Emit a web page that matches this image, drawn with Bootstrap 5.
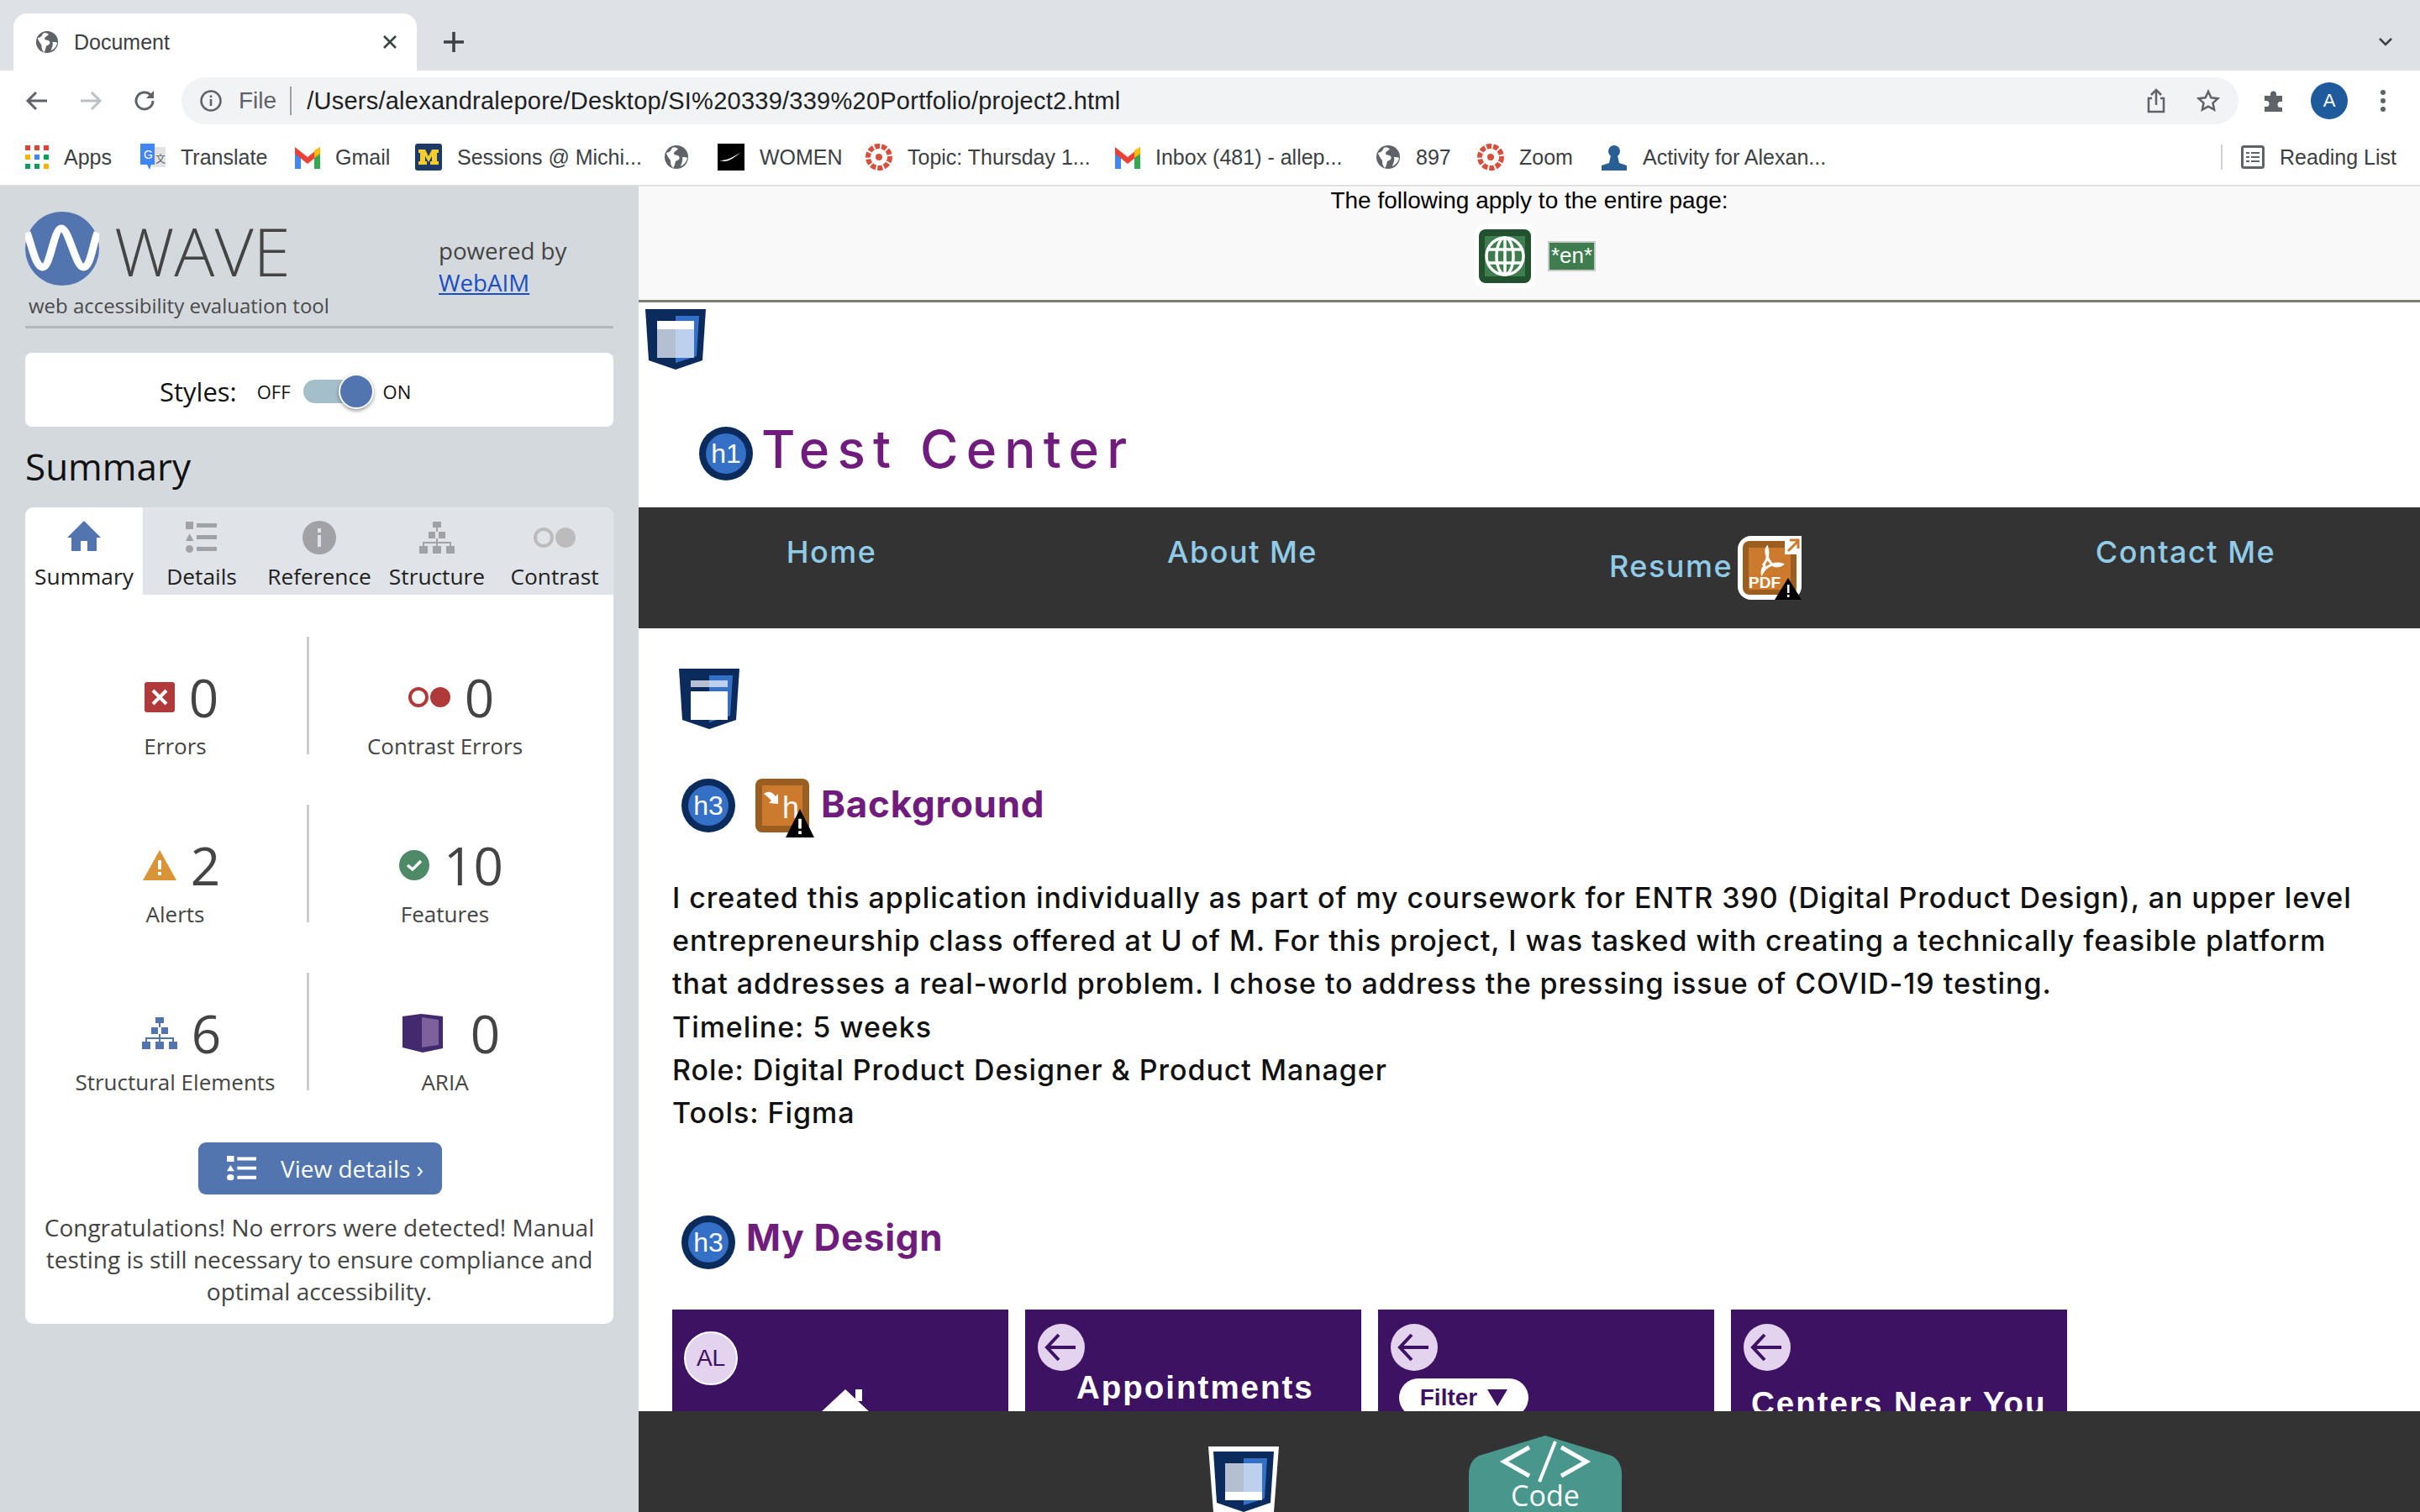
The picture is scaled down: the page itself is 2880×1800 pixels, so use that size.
<!DOCTYPE html>
<html lang="en">
<head>
<meta charset="UTF-8">
<title>Document</title>
<link href="https://cdn.jsdelivr.net/npm/bootstrap@5.3.0/dist/css/bootstrap.min.css" rel="stylesheet">
<style>
html, body { margin: 0; height: 1800px; overflow: hidden; background: #fff; }
body { font-family: "Open Sans", sans-serif; color: #3c4043; }
svg { display: block; flex: none; }

/* browser chrome */
.tab-strip { height: 84px; background: #dee1e6; padding: 16px 0 0 16px; }
.doc-tab { width: 480px; height: 68px; background: #fff; border-radius: 16px 16px 0 0; padding: 0 22px 0 26px; font: 25px "Liberation Sans", sans-serif; }
.doc-tab span { margin-left: 18px; color: #3c4043; }
.plus-btn { margin-left: 30px; margin-top: 20px; width: 28px; }
.strip-chev { margin: 28px 32px 0 auto; }
.tool-bar { height: 64px; padding-right: 28px; }
.nav-icons { width: 216px; height: 72px; padding-left: 30px; gap: 36px; }
.addr-bar { width: 2448px; height: 56px; margin-top: 8px; background: #f1f3f4; border-radius: 28px; padding: 0 22px 0 22px; font: 28px "Liberation Sans", sans-serif; color: #202124; }
.addr-file { color: #5f6368; margin-left: 20px; padding-right: 16px; border-right: 2px solid #9aa0a6; line-height: 34px; margin-right: 18px; }
.addr-url { font-size: 29px; letter-spacing: .25px; }
.avatar-dot { width: 44px; height: 44px; border-radius: 50%; background: #1f5a9c; color: #fff; font: 22px "Liberation Sans", sans-serif; }
.mark-bar { height: 74px; padding: 6px 28px 0 30px; font: 25px "Liberation Sans", sans-serif; color: #3c4043; border-bottom: 2px solid #dedede; }
.bm-item { gap: 18px; white-space: nowrap; }
.bm-sep { border-left: 2px solid #d0d2d5; height: 30px; margin-left: auto; margin-right: 22px; }

/* wave panel */
.page-row { height: 1578px; }
.wave-side { width: 760px; background: #d4d9de; padding: 30px 30px 0; flex: none; }
.wave-name { font-size: 80px; font-weight: 300; line-height: 88px; color: #444; margin: 3px 0 0 18px; }
.wave-logo-row { height: 88px; }
.wave-left { flex: 0 0 492px; }
.wave-tag { font-size: 24px; line-height: 34px; color: #4a4a4a; margin: 7px 0 0 4px; white-space: nowrap; }
.wave-power { font-size: 27.7px; line-height: 38px; color: #444; margin: 0; padding-top: 27px; white-space: nowrap; }
.wave-power a { color: #1a4fc4; }
.wave-rule { border-top: 3px solid #b4b8bd; margin-top: 7px; }
.styles-box { height: 88px; margin-top: 29px; background: #fff; border-radius: 8px; color: #111; padding: 4px 0 0 160px; }
.styles-lab { font-size: 31px; margin-right: 24px; }
.styles-sm { font-size: 22px; }
.tog-track { width: 60px; height: 28px; background: #a5bfca; border-radius: 14px; margin: 0 10px 0 15px; position: relative; }
.tog-knob { position: absolute; right: -24px; top: -7px; width: 42px; height: 42px; background: #5275b0; border: 2px solid #fff; border-radius: 50%; box-shadow: 0 2px 4px rgba(0,0,0,.4); }
.tog-track + span { margin-left: 25px; }
.sum-title { font-size: 44px; font-weight: 400; line-height: 60px; color: #111; margin: 17px 0 19px; }
.sum-card { background: #fff; border-radius: 10px; height: 972px; overflow: hidden; }
.tab-row { background: #e0e4e9; height: 104px; }
.tab-cell { width: 140px; padding-top: 16px; font-size: 26.3px; color: #222; line-height: 36px; }
.tab-cell svg { height: 40px; margin-bottom: 8px; }
.tab-on { background: #fff; }
.stat-grid { display: grid; grid-template-columns: 316px 323px; margin: 50px 0 0 22px; row-gap: 60px; }
.stat-cell { height: 140px; padding-top: 34px; text-align: center; }
.stat-cell:nth-child(odd) { border-right: 3px solid #cdcdcd; }
.stat-num { font-size: 62px; line-height: 76px; color: #444; gap: 17px; padding-left: 15px; }
.stat-lab { font-size: 26px; line-height: 36px; color: #444; margin-top: 2px; }
.view-btn { width: 290px; height: 62px; margin: 62px 0 0 206px; padding: 0 0 0 34px; background: #5275b0; border: 0; border-radius: 9px; color: #fff; font-size: 28px; gap: 28px; }
.view-btn:hover { background: #5275b0; color: #fff; }
.sum-note { font-size: 28px; line-height: 38px; color: #444; text-align: center; margin: 20px 10px 0; }

/* page under test */
.site-col { width: 2120px; }
.apply-bar { height: 138px; background: #f9f9f9; border-bottom: 3px solid #7a7d70; font: 28px/32px "Liberation Sans", sans-serif; color: #000; padding-top: 1px; }
.apply-icons { gap: 15px; margin-top: 12px; padding-left: 14px; }
.en-chip { width: 57px; height: 36px; background: #3f7d4f; border: 2px solid #c8c8c8; color: #fff; font-size: 26px; line-height: 30px; text-align: center; }
.site-body { height: 1320px; overflow: hidden; font-family: Inter, sans-serif; color: #111; }
.head-row { margin: 8px 0 0 8px; }
.title-row { margin: 68px 0 0 72px; gap: 10px; color: #701c7c; font-size: 62px; line-height: 64px; letter-spacing: 9.2px; font-weight: 500; }
.title-row span { margin-top: -10px; }
.site-nav { height: 144px; margin-top: 32px; background: #333; color: #90cce8; font-size: 36px; font-weight: 500; letter-spacing: 1.5px; }
.nav-slot { padding-top: 32px; line-height: 42px; text-align: center; }
.nav-res { padding-top: 34px; gap: 6px; }
.nav-res span { margin-top: 9px; }
.shield-two { margin: 48px 0 0 48px; }
.sec-row { margin: 53px 0 0 51px; color: #701c7c; font-size: 44px; font-weight: 700; line-height: 64px; letter-spacing: .7px; }
.bg-word { margin: -4px 0 0 8px; }
.para-txt { margin: 46px 0 0 40px; font-size: 34px; letter-spacing: .95px; line-height: 51.2px; font-weight: 500; width: 2040px; color: #111; }
.design-row { margin-top: 91px; }
.design-row svg { margin-top: 6px; }
.design-row span { margin: -6px 0 0 13px; }
.shots { margin: 48px 0 0 40px; gap: 20px; }
.shot-box { width: 400px; height: 240px; background: #3e1263; position: relative; color: #fff; font-weight: 700; font-family: "Liberation Sans", sans-serif; padding: 16px 0 0 14px; }
.al-dot { width: 64px; height: 64px; border-radius: 50%; background: #e3d3ef; border: 2px solid #fff; color: #3e1263; font-size: 28px; font-weight: 400; margin-top: 10px; }
.shot-txt { font-size: 38.5px; letter-spacing: 2px; margin-top: -5px; padding-left: 47px; line-height: 48px; }
.filter-pill { width: 154px; height: 46px; background: #fff; color: #3e1263; border-radius: 24px; font-size: 28px; margin: 8px 0 0 11px; gap: 12px; }
.foot-bar { height: 120px; background: #333; }
.code-tab { width: 182px; height: 91px; margin-left: 226px; margin-top: 29px; color: #fff; position: relative; flex: none; }
.foot-shield { margin-top: 42px; margin-left: 678px; }
.code-lab { position: absolute; left: 0; right: 0; top: 53px; text-align: center; font-size: 34px; line-height: 36px; }
</style>
</head>
<body>
<svg width="0" height="0" class="position-absolute">
  <defs>
    <symbol id="globe" viewBox="0 0 30 30">
      <circle cx="15" cy="15" r="14" fill="#5f6368"/>
      <path d="M3 10c4-1 5-2 7-6 3-1 5 0 7 1-2 3-5 3-5 6 0 2 4 1 6 3 2 3-1 5-4 6-1 3-1 6-3 8-3-3-3-6-3-9-2-3-4-5-5-9zM22 15c3 0 5 0 6 1-1 5-4 8-8 10 1-4 3-6 2-11z" fill="#fff"/>
    </symbol>
    <symbol id="shield" viewBox="0 0 72 72">
      <path d="M0 0h72l-4 61-32 11-32-11z" fill="#0a2b5c"/>
      <path d="M36 8h28l-3 48-25 8z" fill="#3570c7"/>
    </symbol>
    <symbol id="h-ring" viewBox="0 0 64 64">
      <circle cx="32" cy="32" r="32" fill="#0a2b5c"/>
      <circle cx="32" cy="32" r="24" fill="#3570c7"/>
    </symbol>
    <symbol id="warn-tri" viewBox="0 0 26 26">
      <path d="M13 0l13 26H0z" fill="#000"/>
      <path d="M11.600 9h2.800v9h-2.800zM11.600 20h2.800v3h-2.800z" fill="#fff"/>
    </symbol>
    <symbol id="list-g" viewBox="0 0 38 38">
      <path d="M0 0h9v9H0zM4.500 14l5 9H0zM4.500 28a4.500 4.500 0 1 1 0 9 4.500 4.500 0 0 1 0-9zM13 2h24v5H13zM13 16h24v5H13zM13 30h24v5H13z"/>
    </symbol>
    <symbol id="tree-g" viewBox="0 0 42 38">
      <path d="M16 0h10v7H16zM20 7h2v5h-2zM11 12h8v8h-8zM23 12h8v8h-8zM5 24h32v2H5zM20 20h2v9h-2zM4 24h2v5H4zM36 24h2v5h-2zM0 29h10v9H0zM16 29h10v9H16zM32 29h10v9H32z"/>
    </symbol>
    <symbol id="back-arrow" viewBox="0 0 58 58">
      <circle cx="29" cy="29" r="28" fill="#e3d3ef"/>
      <path d="M12 29h34M26 14L12 29l14 15" fill="none" stroke="#3e1263" stroke-width="4"/>
    </symbol>
  </defs>
</svg>

<div class="tab-strip d-flex align-items-start">
  <div class="doc-tab d-flex align-items-center">
    <svg width="28" height="28"><use href="#globe"/></svg>
    <span>Document</span>
    <svg class="ms-auto" width="20" height="20" viewBox="0 0 20 20"><path d="M3 3l14 14M17 3L3 17" stroke="#3c4043" stroke-width="2.500"/></svg>
  </div>
  <svg class="plus-btn" height="28" viewBox="0 0 28 28"><path d="M14 2v24M2 14h24" stroke="#3c4043" stroke-width="3.500"/></svg>
  <svg class="strip-chev" width="18" height="12" viewBox="0 0 18 12"><path d="M2 2l7 7 7-7" fill="none" stroke="#3c4043" stroke-width="2.500"/></svg>
</div>

<div class="tool-bar d-flex align-items-start">
  <div class="nav-icons d-flex align-items-center">
    <svg width="28" height="28" viewBox="0 0 28 28"><path d="M26 14H4M13 4L3 14l10 10" fill="none" stroke="#5f6368" stroke-width="3"/></svg>
    <svg width="28" height="28" viewBox="0 0 28 28"><path d="M2 14h22M15 4l10 10-10 10" fill="none" stroke="#bdc1c6" stroke-width="3"/></svg>
    <svg width="28" height="28" viewBox="0 0 28 28"><path d="M24 14a10 10 0 1 1-3-7.200" fill="none" stroke="#5f6368" stroke-width="3"/><path d="M25 2v9h-9z" fill="#5f6368"/></svg>
  </div>
  <div class="addr-bar d-flex align-items-center">
    <svg width="26" height="26" viewBox="0 0 26 26"><circle cx="13" cy="13" r="11.500" fill="none" stroke="#5f6368" stroke-width="2.500"/><path d="M11.700 11h2.600v8h-2.600zM11.700 6.500h2.600v2.600h-2.600z" fill="#5f6368"/></svg>
    <span class="addr-file">File</span>
    <span class="addr-url">/Users/alexandralepore/Desktop/SI%20339/339%20Portfolio/project2.html</span>
    <svg class="ms-auto" width="24" height="30" viewBox="0 0 24 30" style="margin-right:36px"><path d="M12 20V3M6 8l6-6 6 6M7 12H3v16h18V12h-4" fill="none" stroke="#5f6368" stroke-width="2.500"/></svg>
    <svg width="28" height="28" viewBox="0 0 28 28"><path d="M14 3l3.400 7.300 8 1-5.900 5.400 1.600 7.900-7.100-4-7.100 4 1.600-7.900L2.600 11.300l8-1z" fill="none" stroke="#5f6368" stroke-width="2.500"/></svg>
  </div>
  <div class="d-flex align-items-center" style="height:72px;margin-left:28px">
    <svg width="28" height="28" viewBox="0 0 28 28"><path d="M3 8h7V6a3.500 3.500 0 0 1 7 0v2h7v7h-2a3.500 3.500 0 0 0 0 7h2v5H3v-6h2a3.500 3.500 0 0 0 0-7H3z" fill="#5f6368"/></svg>
    <div class="avatar-dot d-flex align-items-center justify-content-center" style="margin-left:30px">A</div>
    <svg width="6" height="28" viewBox="0 0 6 28" style="margin-left:39px"><circle cx="3" cy="4" r="3" fill="#5f6368"/><circle cx="3" cy="14" r="3" fill="#5f6368"/><circle cx="3" cy="24" r="3" fill="#5f6368"/></svg>
  </div>
</div>

<div class="mark-bar d-flex align-items-center">
  <div class="bm-item d-flex align-items-center" style="width:137px">
    <svg width="28" height="28" viewBox="0 0 28 28"><path d="M0 0h6v6H0zM11 0h6v6h-6zM22 0h6v6h-6z" fill="#db4437"/><path d="M0 11h6v6H0z" fill="#f4b400"/><path d="M11 11h6v6h-6z" fill="#4285f4"/><path d="M22 11h6v6h-6z" fill="#0f9d58"/><path d="M0 22h6v6H0zM11 22h6v6h-6z" fill="#0f9d58"/><path d="M22 22h6v6h-6z" fill="#f4b400"/></svg><span>Apps</span>
  </div>
  <div class="bm-item d-flex align-items-center" style="width:184px">
    <svg width="30" height="32" viewBox="0 0 30 32"><path d="M14 4h16v24H14z" fill="#e3e3e3"/><path d="M0 0h17v25H13l-2 6-3-6H0z" fill="#4285f4"/><text x="4" y="18" font-size="14" fill="#fff" font-family="Liberation Sans">G</text><text x="18" y="23" font-size="12" fill="#5f6368" font-family="Noto Sans CJK SC">文</text></svg><span>Translate</span>
  </div>
  <div class="bm-item d-flex align-items-center" style="width:143px">
    <svg width="30" height="28" viewBox="0 0 30 28"><path d="M0 4v24h7V13z" fill="#4285f4"/><path d="M30 4v24h-7V13z" fill="#34a853"/><path d="M0 2l15 12L30 2v8L15 22 0 10z" fill="#ea4335"/><path d="M23 6l7-4v8l-7 5z" fill="#fbbc04"/></svg><span>Gmail</span>
  </div>
  <div class="bm-item d-flex align-items-center" style="width:296px">
    <svg width="32" height="32" viewBox="0 0 32 32"><rect width="32" height="32" rx="3" fill="#1d3a66"/><path d="M4 7h8l4 8 4-8h8v4h-2v10h2v4H18v-4h2v-6l-4 7-4-7v6h2v4H4v-4h2V11H4z" fill="#f5cc2f"/></svg><span>Sessions @ Michi...</span>
  </div>
  <div class="bm-item d-flex align-items-center" style="width:64px">
    <svg width="30" height="30"><use href="#globe"/></svg>
  </div>
  <div class="bm-item d-flex align-items-center" style="width:176px">
    <svg width="32" height="32" viewBox="0 0 32 32"><rect width="32" height="32"/><path d="M4 20c7 0 15-4 24-10-7 6-14 11-20 11-3 0-5-1-4-1z" fill="#fff"/></svg><span>WOMEN</span>
  </div>
  <div class="bm-item d-flex align-items-center" style="width:297px">
    <svg width="32" height="32" viewBox="0 0 32 32"><circle cx="16" cy="16" r="13" fill="none" stroke="#d94f3d" stroke-width="6" stroke-dasharray="6 2"/><circle cx="16" cy="16" r="4" fill="#d94f3d"/></svg><span>Topic: Thursday 1...</span>
  </div>
  <div class="bm-item d-flex align-items-center" style="width:310px">
    <svg width="30" height="28" viewBox="0 0 30 28"><path d="M0 4v24h7V13z" fill="#4285f4"/><path d="M30 4v24h-7V13z" fill="#34a853"/><path d="M0 2l15 12L30 2v8L15 22 0 10z" fill="#ea4335"/><path d="M23 6l7-4v8l-7 5z" fill="#fbbc04"/></svg><span>Inbox (481) - allep...</span>
  </div>
  <div class="bm-item d-flex align-items-center" style="width:121px">
    <svg width="30" height="30"><use href="#globe"/></svg><span>897</span>
  </div>
  <div class="bm-item d-flex align-items-center" style="width:147px">
    <svg width="32" height="32" viewBox="0 0 32 32"><circle cx="16" cy="16" r="13" fill="none" stroke="#d94f3d" stroke-width="6" stroke-dasharray="6 2"/><circle cx="16" cy="16" r="4" fill="#d94f3d"/></svg><span>Zoom</span>
  </div>
  <div class="bm-item d-flex align-items-center">
    <svg width="32" height="32" viewBox="0 0 32 32"><circle cx="16" cy="9" r="7" fill="#2a5f93"/><path d="M12 14h8l2 9 9 3v6H1v-6l9-3z" fill="#2a5f93"/></svg><span>Activity for Alexan...</span>
  </div>
  <div class="bm-sep"></div>
  <div class="bm-item d-flex align-items-center">
    <svg width="28" height="28" viewBox="0 0 28 28"><rect x="1.500" y="1.500" width="25" height="25" rx="2" fill="none" stroke="#5f6368" stroke-width="3"/><path d="M6 8h4v2H6zM12 8h10v2H12zM6 13h4v2H6zM12 13h10v2H12zM6 18h4v2H6zM12 18h10v2H12z" fill="#5f6368"/></svg><span>Reading List</span>
  </div>
</div>

<div class="page-row d-flex">
  <aside class="wave-side">
    <div class="d-flex">
      <div class="wave-left">
        <div class="wave-logo-row d-flex align-items-center">
          <svg width="88" height="88" viewBox="0 0 88 88"><circle cx="44" cy="44" r="44" fill="#5275b0"/><path d="M2 25C8 40 12 66 21 66S34 20 43 20 60 66 69 66 80 40 86 25" fill="none" stroke="#fff" stroke-width="9"/></svg>
          <span class="wave-name">WAVE</span>
        </div>
        <div class="wave-tag">web accessibility evaluation tool</div>
      </div>
      <p class="wave-power">powered by<br><a href="#">WebAIM</a></p>
    </div>
    <div class="wave-rule"></div>
    <div class="styles-box d-flex align-items-center">
      <span class="styles-lab">Styles:</span>
      <span class="styles-sm">OFF</span>
      <div class="tog-track"><div class="tog-knob"></div></div>
      <span class="styles-sm">ON</span>
    </div>
    <h2 class="sum-title">Summary</h2>
    <div class="sum-card">
      <div class="tab-row d-flex">
        <div class="tab-cell tab-on d-flex flex-column align-items-center">
          <svg width="40" height="40" viewBox="0 0 40 40"><path d="M20 0l20 20h-5v16H24V24h-8v12H5V20H0z" fill="#5275b0"/></svg>Summary
        </div>
        <div class="tab-cell d-flex flex-column align-items-center">
          <svg width="38" height="38" fill="#a0a2a5"><use href="#list-g"/></svg>Details
        </div>
        <div class="tab-cell d-flex flex-column align-items-center">
          <svg width="40" height="40" viewBox="0 0 40 40"><circle cx="20" cy="20" r="20" fill="#a0a2a5"/><path d="M18 17h4v14h-4zM18 9h4v5h-4z" fill="#e0e4e9"/></svg>Reference
        </div>
        <div class="tab-cell d-flex flex-column align-items-center">
          <svg width="42" height="38" fill="#a0a2a5"><use href="#tree-g"/></svg>Structure
        </div>
        <div class="tab-cell d-flex flex-column align-items-center">
          <svg width="50" height="40" viewBox="0 0 50 40"><circle cx="12" cy="20" r="10" fill="none" stroke="#bcbcbc" stroke-width="4"/><circle cx="38" cy="20" r="12" fill="#bcbcbc"/></svg>Contrast
        </div>
      </div>
      <div class="stat-grid">
        <div class="stat-cell">
          <div class="stat-num d-flex align-items-center justify-content-center">
            <svg width="36" height="36" viewBox="0 0 36 36"><rect width="36" height="36" rx="3" fill="#b03a3a"/><path d="M10 10l16 16M26 10L10 26" stroke="#fff" stroke-width="4"/></svg>0
          </div>
          <div class="stat-lab">Errors</div>
        </div>
        <div class="stat-cell">
          <div class="stat-num d-flex align-items-center justify-content-center">
            <svg width="50" height="24" viewBox="0 0 50 24"><circle cx="12" cy="12" r="10" fill="none" stroke="#b03a3a" stroke-width="4"/><circle cx="38" cy="12" r="12" fill="#b03a3a"/></svg>0
          </div>
          <div class="stat-lab">Contrast Errors</div>
        </div>
        <div class="stat-cell">
          <div class="stat-num d-flex align-items-center justify-content-center">
            <svg width="40" height="36" viewBox="0 0 40 36"><path d="M20 0l20 36H0z" fill="#d99437"/><path d="M18 12h4v11h-4zM18 26h4v4h-4z" fill="#fff"/></svg>2
          </div>
          <div class="stat-lab">Alerts</div>
        </div>
        <div class="stat-cell">
          <div class="stat-num d-flex align-items-center justify-content-center">
            <svg width="36" height="36" viewBox="0 0 36 36"><circle cx="18" cy="18" r="18" fill="#4f8a68"/><path d="M10 18l6 5 10-10" fill="none" stroke="#fff" stroke-width="3.500"/></svg>10
          </div>
          <div class="stat-lab">Features</div>
        </div>
        <div class="stat-cell">
          <div class="stat-num d-flex align-items-center justify-content-center">
            <svg width="42" height="38" fill="#5275b0"><use href="#tree-g"/></svg>6
          </div>
          <div class="stat-lab">Structural Elements</div>
        </div>
        <div class="stat-cell">
          <div class="stat-num d-flex align-items-center justify-content-center" style="gap:33px">
            <svg width="48" height="46" viewBox="0 0 48 46"><path d="M0 3l22-3 26 3v38l-24 5L0 40z" fill="#43296e"/><path d="M23 4l20 3v30l-20 3z" fill="#7c619c"/></svg>0
          </div>
          <div class="stat-lab">ARIA</div>
        </div>
      </div>
      <button class="btn view-btn d-flex align-items-center">
        <svg width="36" height="30" viewBox="0 0 38 38" preserveAspectRatio="none" fill="#fff"><use href="#list-g"/></svg>View details ›
      </button>
      <p class="sum-note">Congratulations! No errors were detected! Manual testing is still necessary to ensure compliance and optimal accessibility.</p>
    </div>
  </aside>

  <main class="site-col d-flex flex-column">
    <div class="apply-bar text-center">
      <div>The following apply to the entire page:</div>
      <div class="apply-icons d-flex justify-content-center align-items-center">
        <svg width="72" height="76" viewBox="0 0 72 76"><rect width="72" height="76" rx="10" fill="#fff"/><rect x="5" y="6" width="62" height="64" rx="8" fill="#21512f"/><rect x="12" y="14" width="48" height="48" fill="#3f7d4f"/><g fill="none" stroke="#fff" stroke-width="3.500"><circle cx="36" cy="38" r="22"/><ellipse cx="36" cy="38" rx="10" ry="22"/><path d="M15 30h42M15 46h42M36 16v44"/></g></svg>
        <div class="en-chip">*en*</div>
      </div>
    </div>
    <div class="site-body flex-grow-1">
      <div class="head-row">
        <svg width="72" height="72" viewBox="0 0 72 72"><use href="#shield"/><rect x="14" y="14" width="44" height="10" fill="#fff"/><rect x="14" y="24" width="22" height="34" fill="#b4c0d2"/><rect x="36" y="24" width="22" height="34" fill="#bdd1ee"/></svg>
      </div>
      <h1 class="title-row d-flex align-items-center mb-0">
        <svg width="64" height="64" viewBox="0 0 64 64"><use href="#h-ring"/><text x="32" y="43" text-anchor="middle" font-size="32" fill="#fff" font-family="Liberation Sans" letter-spacing="0" font-weight="400">h1</text></svg>
        <span>Test Center</span>
      </h1>
      <nav class="site-nav d-flex">
        <div class="nav-slot" style="flex:0 0 459px">Home</div>
        <div class="nav-slot" style="flex:0 0 519px">About Me</div>
        <div class="nav-res d-flex align-items-start" style="flex:0 0 584px;padding-left:177px"><span>Resume</span>
          <svg width="76" height="76" viewBox="0 0 76 76"><rect width="76" height="76" rx="16" fill="#fff"/><rect x="6" y="6" width="64" height="64" rx="8" fill="#9a5e21"/><rect x="13" y="14" width="50" height="50" fill="#cc7b2e"/><path d="M56 0h20v22H56z" fill="#fff"/><path d="M60 18L72 6M62 5h10v10" stroke="#cc7b2e" stroke-width="3" fill="none"/><path d="M31 34c5-6 6-14 4-20-3 4 0 14 6 20 4 3 10 2 12 0-6-2-18-1-24 10-1-6 5-8 2-10z" fill="none" stroke="#fff" stroke-width="3"/><text x="32" y="62" text-anchor="middle" font-size="19" font-weight="700" fill="#fff" letter-spacing="0" font-family="Liberation Sans">PDF</text><path d="M60 50l16 26H44z"/><path d="M59 58h2.500v10H59zM59 70h2.500v3H59z" fill="#fff"/></svg>
        </div>
        <div class="nav-slot flex-grow-1">Contact Me</div>
      </nav>
      <div class="shield-two">
        <svg width="72" height="72" viewBox="0 0 72 72"><use href="#shield"/><rect x="14" y="14" width="22" height="8" fill="#b4c0d2"/><rect x="36" y="14" width="22" height="8" fill="#bdd1ee"/><rect x="14" y="27" width="44" height="34" fill="#fff"/></svg>
      </div>
      <h3 class="sec-row d-flex align-items-center mb-0">
        <svg width="64" height="64" viewBox="0 0 64 64"><use href="#h-ring"/><text x="32" y="43" text-anchor="middle" font-size="32" fill="#fff" font-family="Liberation Sans" letter-spacing="0" font-weight="400">h3</text></svg>
        <svg width="70" height="70" viewBox="0 0 70 70" style="margin-left:24px;margin-top:6px"><rect width="64" height="64" rx="8" fill="#9a5e21"/><rect x="8" y="8" width="48" height="48" fill="#cc7b2e"/><path d="M10 18c6-4 10-2 14 3l3-3v12l-11-1 3-3c-3-3-5-5-9-8z" fill="#fff"/><text x="42" y="47" text-anchor="middle" font-size="36" fill="#fff" font-family="Liberation Sans" letter-spacing="0" font-weight="400">h</text><use href="#warn-tri" x="36" y="36" width="34" height="34"/></svg>
        <span class="bg-word">Background</span>
      </h3>
      <p class="para-txt mb-0">I created this application individually as part of my coursework for ENTR 390 (Digital Product Design), an upper level entrepreneurship class offered at U of M. For this project, I was tasked with creating a technically feasible platform that addresses a real-world problem. I chose to address the pressing issue of COVID-19 testing.<br>Timeline: 5 weeks<br>Role: Digital Product Designer &amp; Product Manager<br>Tools: Figma</p>
      <h3 class="sec-row design-row d-flex align-items-center mb-0">
        <svg width="64" height="64" viewBox="0 0 64 64"><use href="#h-ring"/><text x="32" y="43" text-anchor="middle" font-size="32" fill="#fff" font-family="Liberation Sans" letter-spacing="0" font-weight="400">h3</text></svg>
        <span>My Design</span>
      </h3>
      <div class="shots d-flex">
        <div class="shot-box">
          <div class="al-dot d-flex align-items-center justify-content-center">AL</div>
          <svg class="position-absolute" style="left:176px;top:95px" width="60" height="40" viewBox="0 0 60 40"><path d="M30 0l30 28H0zM42 0h8v14h-8z" fill="#fff"/></svg>
        </div>
        <div class="shot-box">
          <svg width="58" height="58"><use href="#back-arrow"/></svg>
          <div class="shot-txt">Appointments</div>
        </div>
        <div class="shot-box">
          <svg width="58" height="58"><use href="#back-arrow"/></svg>
          <div class="filter-pill d-flex align-items-center justify-content-center">Filter <svg width="24" height="20" viewBox="0 0 24 20"><path d="M0 0h24L12 20z" fill="#3e1263"/></svg></div>
        </div>
        <div class="shot-box">
          <svg width="58" height="58"><use href="#back-arrow"/></svg>
          <div class="shot-txt" style="padding-left:10px;margin-top:14px">Centers Near You</div>
        </div>
      </div>
    </div>
    <div class="foot-bar d-flex overflow-hidden">
      <svg class="foot-shield" width="84" height="90" viewBox="0 0 84 90"><path d="M0 0h84l-6 78-36 12-36-12z" fill="#fff"/><g transform="translate(6 6)"><path d="M0 0h72l-4 61-32 11-32-11z" fill="#0a2b5c"/><path d="M36 8h28l-3 48-25 8z" fill="#3570c7"/><rect x="14" y="14" width="22" height="34" fill="#b4c0d2"/><rect x="36" y="14" width="22" height="34" fill="#bdd1ee"/><rect x="14" y="48" width="44" height="10" fill="#fff"/></g></svg>
      <div class="code-tab">
        <svg width="182" height="91" viewBox="0 0 182 91"><path d="M91 0l79 24c8 4 12 12 12 22v45H0V46c0-10 4-18 12-22z" fill="#48968c"/><path d="M72 14L42 31l30 17M110 14l30 17-30 17" fill="none" stroke="#fff" stroke-width="5"/><path d="M103 7L84 55" stroke="#fff" stroke-width="4"/></svg>
        <div class="code-lab">Code</div>
      </div>
    </div>
  </main>
</div>
</body>
</html>
